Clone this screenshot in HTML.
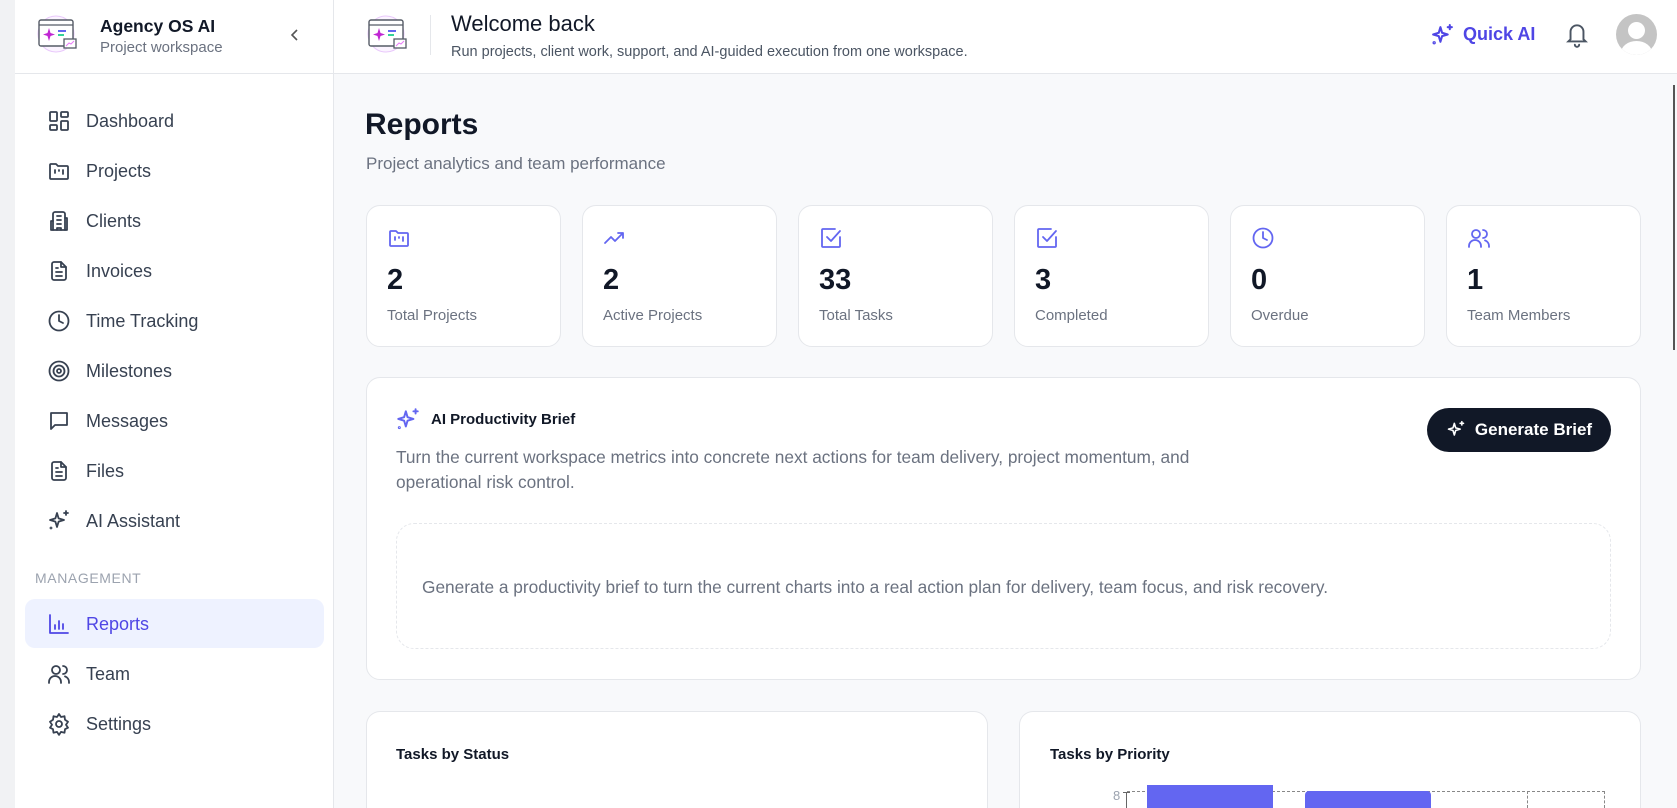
<!DOCTYPE html>
<html style="overflow:hidden;width:1677px;height:808px"><head><meta charset="utf-8"><style>
*{box-sizing:border-box;margin:0;padding:0}
body{width:1677px;height:808px;overflow:hidden;background:#f8f9fb;font-family:"Liberation Sans",sans-serif;position:relative;color:#111827}
.abs{position:absolute}
.strip{left:0;top:0;width:15px;height:808px;background:#f1f2f4}
.side{left:15px;top:0;width:319px;height:808px;background:#fff;border-right:1px solid #e5e7eb}
.top{left:334px;top:0;width:1343px;height:74px;background:#fff;border-bottom:1px solid #e5e7eb}
.sidetop{left:15px;top:0;width:319px;height:74px;border-bottom:1px solid #e5e7eb}
.nav{left:47px;height:24px;display:flex;align-items:center;font-size:18px;color:#374151;font-weight:500}
.nav svg{width:24px;height:24px;margin-right:15px;fill:none;stroke:#374151;stroke-width:1.8;stroke-linecap:round;stroke-linejoin:round}
.card{background:#fff;border:1px solid #e5e7eb;border-radius:14px}
.stat svg{position:absolute;left:20px;top:20px;width:24px;height:24px;fill:none;stroke:#6366f1;stroke-width:1.8;stroke-linecap:round;stroke-linejoin:round}
.stat .n{position:absolute;left:20px;top:58px;font-size:29px;font-weight:700}
.stat .l{position:absolute;left:20px;top:101px;font-size:15px;color:#6b7280}
</style></head><body>
<div class="abs strip"></div>
<div class="abs side"></div>
<div class="abs sidetop"></div>
<div class="abs top"></div>

<svg class="abs" style="left:37px;top:14px" width="40" height="42" viewBox="0 0 40 42">
<circle cx="19" cy="20" r="18" fill="#fbf4ff" stroke="#e9c8fb"/>
<rect x="2" y="6" width="34" height="26" rx="2" fill="#fff" stroke="#555b66" stroke-width="1.4"/>
<line x1="2" y1="11" x2="36" y2="11" stroke="#555b66" stroke-width="1.2"/>
<path d="M12 14 L13.5 19 L18 20.5 L13.5 22 L12 27 L10.5 22 L6 20.5 L10.5 19Z" fill="#c026d3"/>
<rect x="21" y="16" width="8" height="2" fill="#6366f1"/><rect x="21" y="20" width="6" height="2" fill="#34d399"/>
<rect x="27" y="25" width="12" height="9" fill="#fff" stroke="#555b66" stroke-width="1.3"/>
<path d="M29 32 L32 29 L34 30 L37 27" stroke="#e879f9" fill="none"/>
</svg>
<svg class="abs" style="left:367px;top:14px" width="40" height="42" viewBox="0 0 40 42">
<circle cx="19" cy="20" r="18" fill="#fbf4ff" stroke="#e9c8fb"/>
<rect x="2" y="6" width="34" height="26" rx="2" fill="#fff" stroke="#555b66" stroke-width="1.4"/>
<line x1="2" y1="11" x2="36" y2="11" stroke="#555b66" stroke-width="1.2"/>
<path d="M12 14 L13.5 19 L18 20.5 L13.5 22 L12 27 L10.5 22 L6 20.5 L10.5 19Z" fill="#c026d3"/>
<rect x="21" y="16" width="8" height="2" fill="#6366f1"/><rect x="21" y="20" width="6" height="2" fill="#34d399"/>
<rect x="27" y="25" width="12" height="9" fill="#fff" stroke="#555b66" stroke-width="1.3"/>
<path d="M29 32 L32 29 L34 30 L37 27" stroke="#e879f9" fill="none"/>
</svg>
<div class="abs" style="left:430px;top:15px;width:1px;height:40px;background:#e5e7eb"></div>

<div class="abs" style="left:100px;top:16px;font-size:17.5px;font-weight:700">Agency OS AI</div>
<div class="abs" style="left:100px;top:39px;font-size:15px;color:#6b7280">Project workspace</div>
<svg class="abs" style="left:288px;top:27px" width="14" height="16" viewBox="0 0 14 16"><path d="M9 3 L4 8 L9 13" fill="none" stroke="#555" stroke-width="1.6"/></svg>

<div class="abs" style="left:451px;top:11px;font-size:22px;font-weight:500">Welcome back</div>
<div class="abs" style="left:451px;top:44px;font-size:14.5px;color:#4b5563">Run projects, client work, support, and AI-guided execution from one workspace.</div>

<svg class="abs" style="left:1430px;top:23px" width="25" height="25" viewBox="0 0 24 24" fill="none" stroke="#4f46e5" stroke-width="2" stroke-linecap="round" stroke-linejoin="round"><path d="M10 4 L11.6 9.4 L17 11 L11.6 12.6 L10 18 L8.4 12.6 L3 11 L8.4 9.4Z"/><path d="M19 2v4M17 4h4"/><circle cx="4" cy="19" r=".6"/></svg>
<div class="abs" style="left:1463px;top:24px;font-size:18px;font-weight:700;color:#4f46e5">Quick AI</div>
<svg class="abs" style="left:1564px;top:21px" width="26" height="28" viewBox="0 0 24 26" fill="none" stroke="#4b5563" stroke-width="1.8" stroke-linecap="round"><path d="M6 17 V10 a6 6 0 0 1 12 0 V17 L20 19 H4 Z"/><path d="M10 22 a2 2 0 0 0 4 0"/></svg>
<div class="abs" style="left:1616px;top:14px;width:41px;height:41px;border-radius:50%;background:#c4c4c4;overflow:hidden">
<div style="position:absolute;left:12px;top:8px;width:17px;height:17px;border-radius:50%;background:#fff"></div>
<div style="position:absolute;left:5px;top:27px;width:31px;height:24px;border-radius:50%;background:#fff"></div></div>
<div class="abs" style="left:1673px;top:85px;width:2px;height:265px;background:#555"></div>

<div class="abs nav" style="top:109px"><svg viewBox="0 0 24 24"><rect x="3" y="3" width="7" height="9" rx="1"/><rect x="14" y="3" width="7" height="5" rx="1"/><rect x="14" y="12" width="7" height="9" rx="1"/><rect x="3" y="16" width="7" height="5" rx="1"/></svg>Dashboard</div>
<div class="abs nav" style="top:159px"><svg viewBox="0 0 24 24"><path d="M3 6a1 1 0 0 1 1-1h5l2 2h9a1 1 0 0 1 1 1v11a1 1 0 0 1-1 1H4a1 1 0 0 1-1-1Z"/><path d="M8 11v3M12 11v1M16 11v4"/></svg>Projects</div>
<div class="abs nav" style="top:209px"><svg viewBox="0 0 24 24"><path d="M6 21V5a2 2 0 0 1 2-2h8a2 2 0 0 1 2 2v16Z"/><path d="M6 12H4v9h2M18 9h2v12h-2M10 7h4M10 11h4M10 15h4M10 21v-2h4v2"/></svg>Clients</div>
<div class="abs nav" style="top:259px"><svg viewBox="0 0 24 24"><path d="M14 3H7a2 2 0 0 0-2 2v14a2 2 0 0 0 2 2h10a2 2 0 0 0 2-2V8Z"/><path d="M14 3v5h5M9 9h2M9 13h6M9 17h6"/></svg>Invoices</div>
<div class="abs nav" style="top:309px"><svg viewBox="0 0 24 24"><circle cx="12" cy="12" r="9.5"/><path d="M12 6v6l4 2"/></svg>Time Tracking</div>
<div class="abs nav" style="top:359px"><svg viewBox="0 0 24 24"><circle cx="12" cy="12" r="9.5"/><circle cx="12" cy="12" r="5.5"/><circle cx="12" cy="12" r="2"/></svg>Milestones</div>
<div class="abs nav" style="top:409px"><svg viewBox="0 0 24 24"><path d="M4 4h16v12H8l-4 4Z"/></svg>Messages</div>
<div class="abs nav" style="top:459px"><svg viewBox="0 0 24 24"><path d="M14 3H7a2 2 0 0 0-2 2v14a2 2 0 0 0 2 2h10a2 2 0 0 0 2-2V8Z"/><path d="M14 3v5h5M9 9h2M9 13h6M9 17h6"/></svg>Files</div>
<div class="abs nav" style="top:509px"><svg viewBox="0 0 24 24"><path d="M10 4 L11.6 9.4 L17 11 L11.6 12.6 L10 18 L8.4 12.6 L3 11 L8.4 9.4Z"/><path d="M19 2v4M17 4h4"/><circle cx="4" cy="19" r=".5"/></svg>AI Assistant</div>
<div class="abs" style="left:35px;top:570px;font-size:14px;color:#9ca3af;font-weight:500;letter-spacing:.6px">MANAGEMENT</div>
<div class="abs" style="left:25px;top:599px;width:299px;height:49px;background:#eef2ff;border-radius:10px"></div>
<div class="abs nav" style="top:612px;color:#4f46e5"><svg viewBox="0 0 24 24" style="stroke:#4f46e5"><path d="M3 3v18h18M8 17v-4M12 17v-8M16 17v-5"/></svg>Reports</div>
<div class="abs nav" style="top:662px"><svg viewBox="0 0 24 24"><circle cx="9" cy="8" r="4"/><path d="M2 21v-1a6 6 0 0 1 12 0v1M16 4a4 4 0 0 1 0 8M22 21v-1a6 6 0 0 0-4-5.6"/></svg>Team</div>
<div class="abs nav" style="top:712px"><svg viewBox="0 0 24 24"><circle cx="12" cy="12" r="3"/><path d="M12 2l2 3 3.5-.8.5 3.5 3 2-2 3 2 3-3 1.5-.5 3.5-3.5-.8-2 3-2-3-3.5.8-.5-3.5-3-1.5 2-3-2-3 3-2 .5-3.5 3.5.8Z"/></svg>Settings</div>

<div class="abs" style="left:365px;top:108px;font-size:30px;font-weight:700">Reports</div>
<div class="abs" style="left:366px;top:154px;font-size:17px;color:#6b7280">Project analytics and team performance</div>

<div class="abs card stat" style="left:366px;top:205px;width:195px;height:142px"><svg viewBox="0 0 24 24"><path d="M3 6a1 1 0 0 1 1-1h5l2 2h9a1 1 0 0 1 1 1v11a1 1 0 0 1-1 1H4a1 1 0 0 1-1-1Z"/><path d="M8 11v3M12 11v1M16 11v4"/></svg><div class="n">2</div><div class="l">Total Projects</div></div>
<div class="abs card stat" style="left:582px;top:205px;width:195px;height:142px"><svg viewBox="0 0 24 24"><path d="M2 17l6-6 4 4 8-8M15 7h5v5"/></svg><div class="n">2</div><div class="l">Active Projects</div></div>
<div class="abs card stat" style="left:798px;top:205px;width:195px;height:142px"><svg viewBox="0 0 24 24"><path d="M21 11v9a1 1 0 0 1-1 1H4a1 1 0 0 1-1-1V4a1 1 0 0 1 1-1h12"/><path d="M8 11l4 4 9-10"/></svg><div class="n">33</div><div class="l">Total Tasks</div></div>
<div class="abs card stat" style="left:1014px;top:205px;width:195px;height:142px"><svg viewBox="0 0 24 24"><path d="M21 11v9a1 1 0 0 1-1 1H4a1 1 0 0 1-1-1V4a1 1 0 0 1 1-1h12"/><path d="M8 11l4 4 9-10"/></svg><div class="n">3</div><div class="l">Completed</div></div>
<div class="abs card stat" style="left:1230px;top:205px;width:195px;height:142px"><svg viewBox="0 0 24 24"><circle cx="12" cy="12" r="9.5"/><path d="M12 6v6l4 2"/></svg><div class="n">0</div><div class="l">Overdue</div></div>
<div class="abs card stat" style="left:1446px;top:205px;width:195px;height:142px"><svg viewBox="0 0 24 24"><circle cx="9" cy="8" r="4"/><path d="M2 21v-1a6 6 0 0 1 12 0v1M16 4a4 4 0 0 1 0 8M22 21v-1a6 6 0 0 0-4-5.6"/></svg><div class="n">1</div><div class="l">Team Members</div></div>

<div class="abs card" style="left:366px;top:377px;width:1275px;height:303px"></div>
<svg class="abs" style="left:395px;top:407px" width="26" height="26" viewBox="0 0 24 24" fill="none" stroke="#6366f1" stroke-width="1.8" stroke-linecap="round" stroke-linejoin="round"><path d="M10 4 L11.6 9.4 L17 11 L11.6 12.6 L10 18 L8.4 12.6 L3 11 L8.4 9.4Z"/><path d="M19 2v4M17 4h4"/><circle cx="4" cy="19" r=".5"/></svg>
<div class="abs" style="left:431px;top:411px;font-size:15px;font-weight:700">AI Productivity Brief</div>
<div class="abs" style="left:396px;top:445px;width:830px;font-size:17.3px;line-height:25px;color:#6b7280">Turn the current workspace metrics into concrete next actions for team delivery, project momentum, and operational risk control.</div>
<div class="abs" style="left:1427px;top:408px;width:184px;height:44px;border-radius:22px;background:#111827;color:#fff;font-size:17px;font-weight:700;display:flex;align-items:center;justify-content:center;gap:9px">
<svg width="20" height="20" viewBox="0 0 24 24" fill="none" stroke="#fff" stroke-width="1.9" stroke-linecap="round" stroke-linejoin="round"><path d="M10 4 L11.6 9.4 L17 11 L11.6 12.6 L10 18 L8.4 12.6 L3 11 L8.4 9.4Z"/><path d="M19 2v4M17 4h4"/></svg>Generate Brief</div>
<div class="abs" style="left:396px;top:523px;width:1215px;height:126px;border:1px dashed #e5e7eb;border-radius:18px"></div>
<div class="abs" style="left:422px;top:577px;font-size:17.3px;color:#6b7280">Generate a productivity brief to turn the current charts into a real action plan for delivery, team focus, and risk recovery.</div>

<div class="abs card" style="left:366px;top:711px;width:622px;height:97px;border-bottom:none;border-radius:14px 14px 0 0"></div>
<div class="abs card" style="left:1019px;top:711px;width:622px;height:97px;border-bottom:none;border-radius:14px 14px 0 0"></div>
<div class="abs" style="left:396px;top:746px;font-size:15px;font-weight:700">Tasks by Status</div>
<div class="abs" style="left:1050px;top:746px;font-size:15px;font-weight:700">Tasks by Priority</div>
<div class="abs" style="left:1113px;top:788px;font-size:13px;color:#9ca3af">8</div>
<div class="abs" style="left:1123px;top:792px;width:7px;height:1px;background:#666"></div>
<div class="abs" style="left:1126px;top:792px;width:1px;height:16px;background:#666"></div>
<div class="abs" style="left:1127px;top:791px;width:478px;height:17px;border-top:1px dashed #888;border-right:1px dashed #888"></div>
<div class="abs" style="left:1527px;top:791px;width:1px;height:17px;border-left:1px dashed #888"></div>
<div class="abs" style="left:1147px;top:785px;width:126px;height:23px;background:#6366f1"></div>
<div class="abs" style="left:1305px;top:791px;width:126px;height:17px;background:#6366f1;border-radius:4px 4px 0 0"></div>
</body></html>
